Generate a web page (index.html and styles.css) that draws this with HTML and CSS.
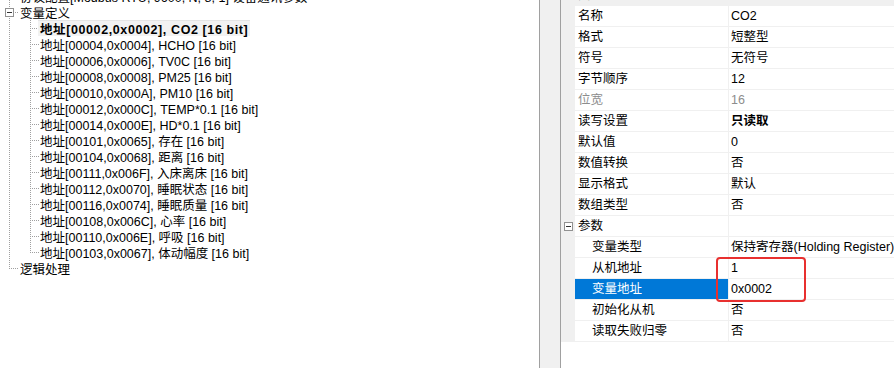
FILE: index.html
```html
<!DOCTYPE html>
<html lang="zh-CN">
<head>
<meta charset="utf-8">
<title>变量定义</title>
<link rel="stylesheet" href="styles.css">
</head>
<body>
<div class="app">
  <div class="tree">
    <div class="row clip-top"><span class="g g-v"></span><span class="t">协议配置[Modbus RTU, 9600, N, 8, 1] 设备通讯参数</span></div>
    <div class="row"><span class="g g-v g-box"><span class="box"><span class="minus"></span></span></span><span class="t">变量定义</span></div>
    <div class="row"><span class="g g-v"></span><span class="g2"></span><span class="t"><span class="sel">地址[00002,0x0002], CO2 [16 bit]</span></span></div>
    <div class="row"><span class="g g-v"></span><span class="g2"></span><span class="t">地址[00004,0x0004], HCHO [16 bit]</span></div>
    <div class="row"><span class="g g-v"></span><span class="g2"></span><span class="t">地址[00006,0x0006], TV0C [16 bit]</span></div>
    <div class="row"><span class="g g-v"></span><span class="g2"></span><span class="t">地址[00008,0x0008], PM25 [16 bit]</span></div>
    <div class="row"><span class="g g-v"></span><span class="g2"></span><span class="t">地址[00010,0x000A], PM10 [16 bit]</span></div>
    <div class="row"><span class="g g-v"></span><span class="g2"></span><span class="t">地址[00012,0x000C], TEMP*0.1 [16 bit]</span></div>
    <div class="row"><span class="g g-v"></span><span class="g2"></span><span class="t">地址[00014,0x000E], HD*0.1 [16 bit]</span></div>
    <div class="row"><span class="g g-v"></span><span class="g2"></span><span class="t">地址[00101,0x0065], 存在 [16 bit]</span></div>
    <div class="row"><span class="g g-v"></span><span class="g2"></span><span class="t">地址[00104,0x0068], 距离 [16 bit]</span></div>
    <div class="row"><span class="g g-v"></span><span class="g2"></span><span class="t">地址[00111,0x006F], 入床离床 [16 bit]</span></div>
    <div class="row"><span class="g g-v"></span><span class="g2"></span><span class="t">地址[00112,0x0070], 睡眠状态 [16 bit]</span></div>
    <div class="row"><span class="g g-v"></span><span class="g2"></span><span class="t">地址[00116,0x0074], 睡眠质量 [16 bit]</span></div>
    <div class="row"><span class="g g-v"></span><span class="g2"></span><span class="t">地址[00108,0x006C], 心率 [16 bit]</span></div>
    <div class="row"><span class="g g-v"></span><span class="g2"></span><span class="t">地址[00110,0x006E], 呼吸 [16 bit]</span></div>
    <div class="row"><span class="g g-v"></span><span class="g2 g2-last"></span><span class="t">地址[00103,0x0067], 体动幅度 [16 bit]</span></div>
    <div class="row"><span class="g g-last"></span><span class="t">逻辑处理</span></div>
  </div>
  <div class="gutter"></div>
  <div class="grid">
    <div class="pg-row cat-gray"><span class="m"><span class="box"><span class="minus"></span></span></span><span class="n cat-label">变量属性</span><span class="v"></span></div>
    <div class="pg-row"><span class="m"></span><span class="n">名称</span><span class="v">CO2</span></div>
    <div class="pg-row"><span class="m"></span><span class="n">格式</span><span class="v">短整型</span></div>
    <div class="pg-row"><span class="m"></span><span class="n">符号</span><span class="v">无符号</span></div>
    <div class="pg-row"><span class="m"></span><span class="n">字节顺序</span><span class="v">12</span></div>
    <div class="pg-row ro"><span class="m"></span><span class="n">位宽</span><span class="v">16</span></div>
    <div class="pg-row"><span class="m"></span><span class="n">读写设置</span><span class="v bold">只读取</span></div>
    <div class="pg-row"><span class="m"></span><span class="n">默认值</span><span class="v">0</span></div>
    <div class="pg-row"><span class="m"></span><span class="n">数值转换</span><span class="v">否</span></div>
    <div class="pg-row"><span class="m"></span><span class="n">显示格式</span><span class="v">默认</span></div>
    <div class="pg-row"><span class="m"></span><span class="n">数组类型</span><span class="v">否</span></div>
    <div class="pg-row"><span class="m"><span class="box"><span class="minus"></span></span></span><span class="n">参数</span><span class="v"></span></div>
    <div class="pg-row"><span class="m"></span><span class="n sub">变量类型</span><span class="v">保持寄存器(Holding Register)</span></div>
    <div class="pg-row"><span class="m"></span><span class="n sub">从机地址</span><span class="v">1</span></div>
    <div class="pg-row selected"><span class="m"></span><span class="n sub">变量地址</span><span class="v">0x0002</span></div>
    <div class="pg-row"><span class="m"></span><span class="n sub">初始化从机</span><span class="v">否</span></div>
    <div class="pg-row"><span class="m"></span><span class="n sub">读取失败归零</span><span class="v">否</span></div>
  </div>
</div>
<div class="mark"></div>
</body>
</html>
```

FILE: styles.css
```css
html, body {
  margin: 0;
  padding: 0;
}
body {
  width: 894px;
  height: 368px;
  overflow: hidden;
  position: relative;
  background: #fff;
  font-family: "Liberation Sans", "Noto Sans CJK SC", sans-serif;
  font-size: 12.5px;
  color: #000;
}
.app {
  display: flex;
  height: 368px;
}
.tree {
  width: 539px;
  flex: none;
  border-right: 1px solid #a0a0a0;
  background: #fff;
  overflow: hidden;
}
.row {
  display: flex;
  align-items: center;
  height: 16px;
  white-space: nowrap;
}
.clip-top {
  margin-top: -12px;
}
.t {
  display: flex;
  align-items: center;
  height: 16px;
}
.g {
  width: 20px;
  height: 16px;
  flex: none;
  display: flex;
  align-items: center;
  background-repeat: no-repeat;
}
.g-v {
  background-image: repeating-linear-gradient(to bottom, #a0a0a0 0 1px, transparent 1px 2px);
  background-position: 9px 0;
  background-size: 1px 16px;
}
.g-box {
  background-image:
    repeating-linear-gradient(to bottom, #a0a0a0 0 1px, transparent 1px 2px),
    repeating-linear-gradient(to right, #a0a0a0 0 1px, transparent 1px 2px);
  background-position: 9px 0, 15px 8px;
  background-size: 1px 16px, 4px 1px;
}
.g-last {
  background-image:
    repeating-linear-gradient(to bottom, #a0a0a0 0 1px, transparent 1px 2px),
    repeating-linear-gradient(to right, #a0a0a0 0 1px, transparent 1px 2px);
  background-position: 9px 0, 11px 8px;
  background-size: 1px 9px, 8px 1px;
}
.g2 {
  width: 20px;
  height: 16px;
  flex: none;
  background-image:
    repeating-linear-gradient(to bottom, #a0a0a0 0 1px, transparent 1px 2px),
    repeating-linear-gradient(to right, #a0a0a0 0 1px, transparent 1px 2px);
  background-position: 10px 0, 12px 8px;
  background-size: 1px 16px, 7px 1px;
  background-repeat: no-repeat;
}
.g2-last {
  background-size: 1px 9px, 7px 1px;
}
.box {
  width: 9px;
  height: 9px;
  box-sizing: border-box;
  border: 1px solid #919191;
  background: #fff;
  margin-left: 5px;
  display: flex;
  align-items: center;
  justify-content: center;
  flex: none;
}
.minus {
  width: 5px;
  height: 1px;
  background: #333;
}
.sel {
  font-weight: bold;
  letter-spacing: 0.6px;
  background: #f2f2f2;
  border-top: 1px solid #e4e4e4;
  margin-left: -2px;
  padding: 0 2px;
  height: 15px;
  display: flex;
  align-items: center;
}
.gutter {
  width: 20px;
  flex: none;
  background: #f0f0f0;
  border-right: 1px solid #a0a0a0;
}
.grid {
  flex: 1;
  background: #fff;
  overflow: hidden;
  min-width: 0;
}
.pg-row {
  display: grid;
  grid-template-columns: 14px 154px 1fr;
  height: 21px;
  box-sizing: border-box;
  border-bottom: 1px solid #f0f0f0;
  white-space: nowrap;
}
.cat-gray {
  margin-top: -15px;
  background: #f0f0f0;
}
.cat-label {
  font-weight: bold;
}
.m {
  background: #f0f0f0;
  display: flex;
  align-items: center;
}
.m .box {
  margin-left: 3px;
}
.n {
  padding-left: 3px;
  border-right: 1px solid #f0f0f0;
  line-height: 20px;
  overflow: hidden;
}
.n.sub {
  padding-left: 17px;
}
.v {
  padding-left: 2px;
  line-height: 20px;
  overflow: hidden;
}
.bold {
  font-weight: bold;
}
.ro .n,
.ro .v {
  color: #8d8d8d;
}
.selected .n {
  background: #0078d7;
  color: #fff;
}
.mark {
  position: absolute;
  left: 716px;
  top: 257px;
  width: 90px;
  height: 45px;
  box-sizing: border-box;
  border: 2px solid #e8302f;
  border-radius: 4px;
}
```
